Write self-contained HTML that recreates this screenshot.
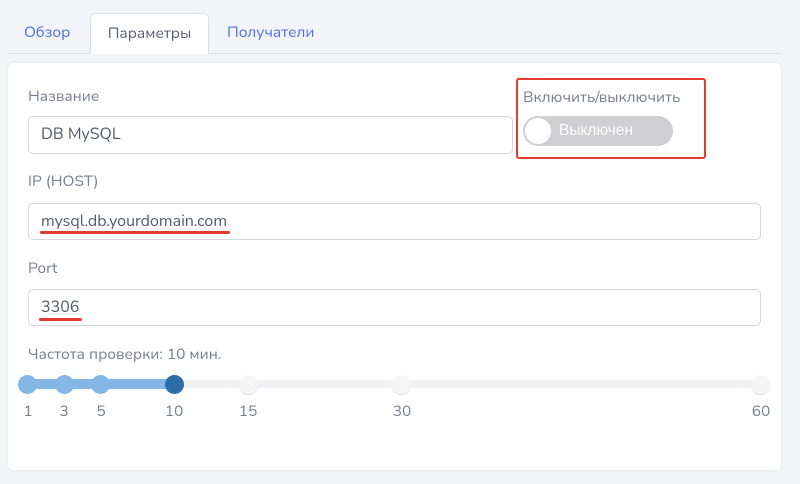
<!DOCTYPE html>
<html><head><meta charset="utf-8"><style>
*{box-sizing:border-box;margin:0;padding:0}
body{width:800px;height:484px;background:#f3f4f8;font-family:"Nunito","Liberation Sans",sans-serif;position:relative;overflow:hidden;color:#6b6f80}
.a{position:absolute}
.tab{position:absolute;top:13px;height:41px;font-size:15.5px;line-height:40px;color:#4a6ee0}
.card{left:8px;top:63px;width:773px;height:407px;background:#fff;border-radius:5px;box-shadow:0 0 3px rgba(0,0,0,.08)}
.lbl{font-size:15.5px;color:#7a7d8c}
.inp{border:1px solid #d4d6e2;border-radius:5px;background:#fff;font-size:16px;color:#555866;padding-left:12px;line-height:34px}
.dot{position:absolute;width:19px;height:19px;border-radius:50%;top:375px}
.num{position:absolute;top:401px;font-size:15.5px;color:#7a7d8c;width:30px;text-align:center}
</style></head><body>
<div class="a" style="left:7px;top:53px;width:775px;height:1px;background:#dcdde5"></div>
<div class="tab" style="left:24px">Обзор</div>
<div class="tab" style="left:90px;width:119px;background:#fff;border:1px solid #dcdde5;border-bottom:none;border-radius:5px 5px 0 0;color:#5a5e6e;text-align:center">Параметры</div>
<div class="tab" style="left:227px">Получатели</div>
<div class="a card"></div>
<div class="a lbl" style="left:28px;top:86px">Название</div>
<div class="a inp" style="left:28px;top:116px;width:485px;height:38px">DB MySQL</div>
<div class="a" style="left:516px;top:78px;width:190px;height:81px;border:2px solid #e53a2f;border-radius:3px"></div>
<div class="a lbl" style="left:523px;top:87px">Включить/выключить</div>
<div class="a" style="left:523px;top:116px;width:150px;height:30px;border-radius:15px;background:#cfcfd1"></div>
<div class="a" style="left:525px;top:118px;width:26px;height:26px;border-radius:50%;background:#fff"></div>
<div class="a" style="left:559px;top:122px;font-size:15.5px;color:#fff;font-family:'Liberation Sans',sans-serif">Выключен</div>
<div class="a lbl" style="left:28px;top:171px">IP (HOST)</div>
<div class="a inp" style="left:28px;top:203px;width:733px;height:37px">mysql.db.yourdomain.com</div>
<div class="a" style="left:40px;top:231px;width:190px;height:3px;background:#e53a2f;border-radius:2px"></div>
<div class="a lbl" style="left:28px;top:258px">Port</div>
<div class="a inp" style="left:28px;top:289px;width:733px;height:37px">3306</div>
<div class="a" style="left:39px;top:318px;width:43px;height:3px;background:#e53a2f;border-radius:2px"></div>
<div class="a lbl" style="left:28px;top:344px">Частота проверки: 10 мин.</div>
<div class="a" style="left:28px;top:380px;width:733px;height:8px;background:#f1f1f3;border-radius:4px"></div>
<div class="a" style="left:28px;top:379px;width:146px;height:10px;background:#84b7e6"></div>
<div class="dot" style="left:18px;background:#84b7e6"></div>
<div class="dot" style="left:55px;background:#84b7e6"></div>
<div class="dot" style="left:91px;background:#84b7e6"></div>
<div class="dot" style="left:165px;background:#2e6ea8"></div>
<div class="dot" style="left:239px;background:#f6f6f7;box-shadow:0 1px 1px #ddd"></div>
<div class="dot" style="left:392px;background:#f6f6f7;box-shadow:0 1px 1px #ddd"></div>
<div class="dot" style="left:751px;background:#f6f6f7;box-shadow:0 1px 1px #ddd"></div>
<div class="num" style="left:13px">1</div>
<div class="num" style="left:49px">3</div>
<div class="num" style="left:86px">5</div>
<div class="num" style="left:159px">10</div>
<div class="num" style="left:233px">15</div>
<div class="num" style="left:387px">30</div>
<div class="num" style="left:746px">60</div>
</body></html>
